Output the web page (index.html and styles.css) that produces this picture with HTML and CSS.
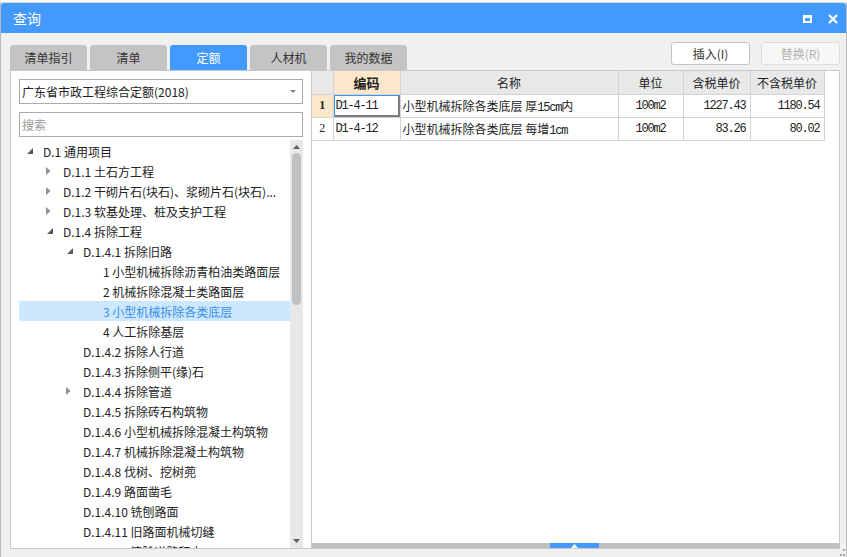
FILE: index.html
```html
<!DOCTYPE html>
<html lang="zh-CN">
<head>
<meta charset="utf-8">
<title>查询</title>
<link rel="stylesheet" href="styles.css">
</head>
<body>
<div class="bgstrip"></div>
<div class="window">
  <div class="titlebar">
    <span class="title">查询</span>
    <span class="wmax"></span>
    <svg class="wclose" width="10" height="10" viewBox="0 0 10 10"><path d="M1 1 L9 9 M9 1 L1 9" stroke="#fff" stroke-width="2.2" fill="none"/></svg>
  </div>
  <div class="content">
    <div class="toolbar">
      <div class="tabs">
        <div class="tab">清单指引</div>
        <div class="tab">清单</div>
        <div class="tab active">定额</div>
        <div class="tab">人材机</div>
        <div class="tab">我的数据</div>
      </div>
      <div class="actions">
        <div class="btn">插入(I)</div>
        <div class="btn disabled">替换(R)</div>
      </div>
    </div>
    <div class="panels">
      <div class="left">
        <div class="select">
          <span>广东省市政工程综合定额(2018)</span>
          <svg class="caret" width="6" height="3" viewBox="0 0 6 3"><polygon points="0,0 6,0 3,3" fill="#808080"/></svg>
        </div>
        <div class="search">搜索</div>
        <div class="treewrap">
          <div class="tree">
            <div class="row l0"><span class="tog"><svg class="exp" width="6" height="6" viewBox="0 0 6 6"><polygon points="6,0 6,6 0,6" fill="#595959"/></svg></span><span class="lbl">D.1 通用项目</span></div>
            <div class="row l1"><span class="tog"><svg class="col" width="5" height="8" viewBox="0 0 5 8"><polygon points="0,0 4.5,4 0,8" fill="#8f8f8f"/></svg></span><span class="lbl">D.1.1 土石方工程</span></div>
            <div class="row l1"><span class="tog"><svg class="col" width="5" height="8" viewBox="0 0 5 8"><polygon points="0,0 4.5,4 0,8" fill="#8f8f8f"/></svg></span><span class="lbl">D.1.2 干砌片石(块石)、浆砌片石(块石)...</span></div>
            <div class="row l1"><span class="tog"><svg class="col" width="5" height="8" viewBox="0 0 5 8"><polygon points="0,0 4.5,4 0,8" fill="#8f8f8f"/></svg></span><span class="lbl">D.1.3 软基处理、桩及支护工程</span></div>
            <div class="row l1"><span class="tog"><svg class="exp" width="6" height="6" viewBox="0 0 6 6"><polygon points="6,0 6,6 0,6" fill="#595959"/></svg></span><span class="lbl">D.1.4 拆除工程</span></div>
            <div class="row l2"><span class="tog"><svg class="exp" width="6" height="6" viewBox="0 0 6 6"><polygon points="6,0 6,6 0,6" fill="#595959"/></svg></span><span class="lbl">D.1.4.1 拆除旧路</span></div>
            <div class="row l3"><span class="tog"></span><span class="lbl">1 小型机械拆除沥青柏油类路面层</span></div>
            <div class="row l3"><span class="tog"></span><span class="lbl">2 机械拆除混凝土类路面层</span></div>
            <div class="row l3 sel"><span class="tog"></span><span class="lbl">3 小型机械拆除各类底层</span></div>
            <div class="row l3"><span class="tog"></span><span class="lbl">4 人工拆除基层</span></div>
            <div class="row l2"><span class="tog"></span><span class="lbl">D.1.4.2 拆除人行道</span></div>
            <div class="row l2"><span class="tog"></span><span class="lbl">D.1.4.3 拆除侧平(缘)石</span></div>
            <div class="row l2"><span class="tog"><svg class="col" width="5" height="8" viewBox="0 0 5 8"><polygon points="0,0 4.5,4 0,8" fill="#8f8f8f"/></svg></span><span class="lbl">D.1.4.4 拆除管道</span></div>
            <div class="row l2"><span class="tog"></span><span class="lbl">D.1.4.5 拆除砖石构筑物</span></div>
            <div class="row l2"><span class="tog"></span><span class="lbl">D.1.4.6 小型机械拆除混凝土构筑物</span></div>
            <div class="row l2"><span class="tog"></span><span class="lbl">D.1.4.7 机械拆除混凝土构筑物</span></div>
            <div class="row l2"><span class="tog"></span><span class="lbl">D.1.4.8 伐树、挖树蔸</span></div>
            <div class="row l2"><span class="tog"></span><span class="lbl">D.1.4.9 路面凿毛</span></div>
            <div class="row l2"><span class="tog"></span><span class="lbl">D.1.4.10 铣刨路面</span></div>
            <div class="row l2"><span class="tog"></span><span class="lbl">D.1.4.11 旧路面机械切缝</span></div>
            <div class="row l2"><span class="tog"></span><span class="lbl">D.1.4.12 清除道路积土</span></div>
          </div>
          <div class="vscroll">
            <div class="arrow up"><svg width="7" height="4" viewBox="0 0 7 4"><polygon points="3.5,0 7,4 0,4" fill="#606060"/></svg></div>
            <div class="thumb"></div>
            <div class="spacer"></div>
            <div class="arrow down"><svg width="7" height="4" viewBox="0 0 7 4"><polygon points="0,0 7,0 3.5,4" fill="#606060"/></svg></div>
          </div>
        </div>
      </div>
      <div class="right">
        <div class="gridarea">
          <table class="grid">
            <colgroup>
              <col class="c-num"><col class="c-code"><col class="c-name"><col class="c-unit"><col class="c-p1"><col class="c-p2">
            </colgroup>
            <thead>
              <tr><th class="hnum"></th><th class="hsel">编码</th><th>名称</th><th>单位</th><th>含税单价</th><th>不含税单价</th></tr>
            </thead>
            <tbody>
              <tr><td class="num cur">1</td><td class="code cur">D1-4-11</td><td class="name">小型机械拆除各类底层 厚<span class="mono">15cm</span>内</td><td class="unit">100m2</td><td class="price">1227.43</td><td class="price">1180.54</td></tr>
              <tr><td class="num">2</td><td class="code">D1-4-12</td><td class="name">小型机械拆除各类底层 每增<span class="mono">1cm</span></td><td class="unit">100m2</td><td class="price">83.26</td><td class="price">80.02</td></tr>
            </tbody>
          </table>
        </div>
        <div class="hbar">
          <div class="hthumb"><svg width="7" height="4" viewBox="0 0 7 4"><polygon points="3.5,0 7,4 0,4" fill="#fff"/></svg></div>
        </div>
      </div>
    </div>
  </div>
  <div class="grip">
    <i></i><i></i><i></i>
  </div>
</div>
</body>
</html>
```
FILE: styles.css
```css
* { box-sizing: border-box; }

body {
  margin: 0;
  width: 847px;
  height: 557px;
  overflow: hidden;
  background: #f0f0f0;
  font-family: "Noto Sans CJK SC", "Noto Sans", sans-serif;
  font-size: 12px;
  color: #222;
}

.bgstrip {
  height: 3px;
  background: #fbfbfb;
  border-bottom: 1px solid #d8d8d8;
}

.window {
  position: relative;
  height: 554px;
  display: flex;
  flex-direction: column;
  background: #f0f0f0;
  border-left: 1px solid #b9b9b9;
  border-right: 1px solid #b9b9b9;
}

.titlebar {
  height: 30px;
  flex: none;
  display: flex;
  align-items: center;
  padding: 0 8px 0 12px;
  background: #4299fe;
  color: #fff;
  font-size: 14px;
  border-radius: 3px 3px 0 0;
}

.title { flex: 1; }

.wmax {
  width: 9px;
  height: 8px;
  border: 2px solid #fff;
  border-top-width: 3px;
  margin-right: 16px;
  margin-top: 1px;
}

.wclose { margin-top: 1px; }

.content {
  flex: 1;
  min-height: 0;
  display: flex;
  flex-direction: column;
  padding: 0 6px 8px 9px;
}

.toolbar {
  height: 37px;
  flex: none;
  display: flex;
  align-items: flex-end;
}

.tabs {
  display: flex;
  gap: 3px;
}

.tab {
  width: 77px;
  height: 25px;
  line-height: 25px;
  text-align: center;
  background: #c4c4c4;
  color: #333;
  border-radius: 3px 3px 0 0;
}

.tab.active {
  background: #4299fe;
  color: #fff;
}

.actions {
  margin-left: auto;
  align-self: flex-start;
  margin-top: 9px;
  display: flex;
  gap: 11px;
}

.btn {
  width: 79px;
  height: 23px;
  line-height: 21px;
  text-align: center;
  background: #fff;
  border: 1px solid #c3c3c3;
  border-radius: 3px;
  color: #333;
}

.btn.disabled {
  background: #f7f7f7;
  border-color: #dcdcdc;
  color: #b2b2b2;
}

.panels {
  flex: 1;
  min-height: 0;
  display: flex;
}

.left {
  width: 301px;
  flex: none;
  display: flex;
  flex-direction: column;
  background: #fff;
  border: 1px solid #c8c8c8;
  border-right: none;
  padding: 8px 8px 0 8px;
}

.select {
  height: 25px;
  flex: none;
  display: flex;
  align-items: center;
  border: 1px solid #ababab;
  padding-left: 2px;
  color: #222;
}

.caret { margin-left: auto; margin-right: 6px; }

.search {
  height: 25px;
  flex: none;
  margin-top: 8px;
  border: 1px solid #ababab;
  padding-left: 2px;
  line-height: 23px;
  color: #9a9a9a;
}

.treewrap {
  flex: 1;
  min-height: 0;
  margin-top: 3px;
  display: flex;
}

.tree {
  flex: 1;
  min-width: 0;
  padding-top: 1px;
  overflow: hidden;
}

.row {
  height: 20px;
  display: flex;
  align-items: center;
  white-space: nowrap;
  overflow: hidden;
  color: #222;
}

.row.l0 { padding-left: 4px; }
.row.l1 { padding-left: 24px; }
.row.l2 { padding-left: 44px; }
.row.l3 { padding-left: 64px; }

.row.sel {
  background: #cce8ff;
  color: #3a8ee6;
}

.tog {
  width: 20px;
  flex: none;
  display: flex;
  align-items: center;
}

.tog .exp { margin-left: 4px; }
.tog .col { margin-left: 3px; }

.lbl { overflow: hidden; text-overflow: clip; }

.vscroll {
  width: 13px;
  flex: none;
  display: flex;
  flex-direction: column;
  align-items: center;
  background: #e8e8e8;
}

.arrow {
  height: 13px;
  display: flex;
  align-items: center;
  justify-content: center;
  flex: none;
}

.arrow.down { height: 13px; padding-bottom: 2px; }

.thumb {
  width: 9px;
  height: 152px;
  flex: none;
  background: #c1c1c1;
  border-radius: 5px;
}

.spacer { flex: 1; }

.right {
  flex: 1;
  min-width: 0;
  display: flex;
  flex-direction: column;
  background: #fff;
  border: 1px solid #c8c8c8;
}

.gridarea { flex: 1; min-height: 0; }

.grid {
  border-collapse: collapse;
  table-layout: fixed;
  width: 512px;
}

.c-num { width: 21px; }
.c-code { width: 67px; }
.c-name { width: 218px; }
.c-unit { width: 65px; }
.c-p1 { width: 67px; }
.c-p2 { width: 74px; }

.grid th,
.grid td {
  height: 23px;
  padding: 0;
  border-right: 1px solid #d3d3d3;
  border-bottom: 1px solid #d3d3d3;
  white-space: nowrap;
  overflow: hidden;
}

.grid th {
  background: #e8e8e8;
  font-weight: normal;
  font-size: 12px;
  color: #222;
  text-align: center;
}

.grid th.hsel {
  background: #fde7cb;
  font-weight: bold;
  font-size: 13px;
}

.grid td.num {
  text-align: center;
  font-family: "Liberation Serif", serif;
  font-size: 12px;
}

.grid td.num.cur {
  background: #fde7cb;
  font-weight: bold;
}

.mono,
.grid td.code,
.grid td.unit,
.grid td.price {
  font-family: "Liberation Mono", monospace;
  font-size: 12px;
  letter-spacing: -1.2px;
}

.grid td.code { padding-left: 2px; }

.grid td.code.cur {
  box-shadow: inset 1px 1px 0 #3d95f5, inset -2px -2px 0 #7c7c7c;
}

.grid td.name { padding-left: 2px; }

.grid td.unit { text-align: center; }

.grid td.price { text-align: right; padding-right: 4px; }

.hbar {
  height: 5px;
  flex: none;
  display: flex;
  background: #c0c0c0;
}

.hthumb {
  width: 49px;
  margin-left: 238px;
  background: #4299fe;
  display: flex;
  align-items: flex-start;
  justify-content: center;
}

.hthumb svg { margin-top: 1px; }

.grip {
  position: absolute;
  right: 0;
  bottom: 0;
  width: 9px;
  height: 8px;
  display: grid;
  grid-template-columns: 3px 3px 3px;
  grid-template-rows: 3px 3px;
  gap: 2px 0;
  justify-content: end;
  align-content: end;
}

.grip i {
  width: 2px;
  height: 2px;
  background: #a8a8a8;
}

.grip i:first-child { grid-column: 3; grid-row: 1; }
.grip i:nth-child(2) { grid-column: 2; grid-row: 2; }
.grip i:nth-child(3) { grid-column: 3; grid-row: 2; }
```
